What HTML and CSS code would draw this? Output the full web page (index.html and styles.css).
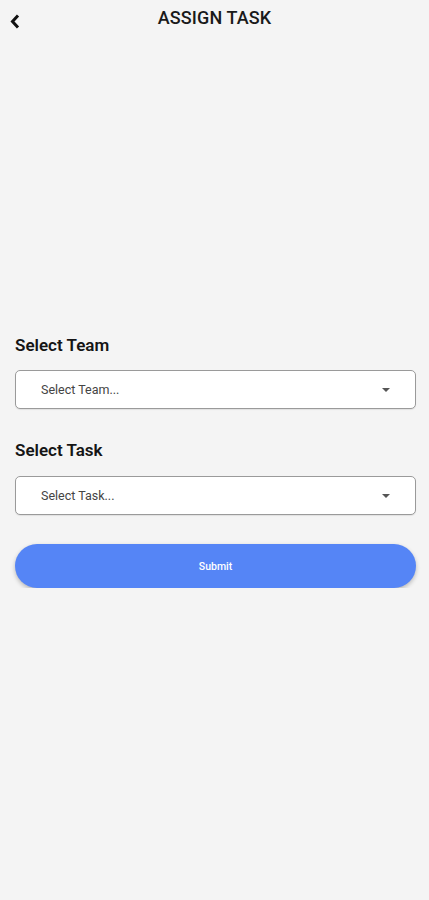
FILE: index.html
```html
<!DOCTYPE html>
<html lang="en">
<head>
<meta charset="utf-8">
<title>Assign Task</title>
<link rel="stylesheet" href="styles.css">
</head>
<body>
<header class="topbar">
  <button class="back" aria-label="Back">
    <svg width="10" height="15" viewBox="0 0 10 15"><polyline points="8,1.5 2.5,7.5 8,13.5" fill="none" stroke="#111" stroke-width="3" stroke-linejoin="miter"/></svg>
  </button>
  <h1 class="title">ASSIGN TASK</h1>
  <span></span>
</header>
<main class="form">
  <label class="label">Select Team</label>
  <div class="select">
    <span class="placeholder">Select Team...</span>
    <span class="caret"></span>
  </div>
  <label class="label label-second">Select Task</label>
  <div class="select">
    <span class="placeholder">Select Task...</span>
    <span class="caret"></span>
  </div>
  <button class="submit">Submit</button>
</main>
</body>
</html>
```
FILE: styles.css
```css
html, body {
  margin: 0;
  padding: 0;
  background: #f4f4f4;
  font-family: Roboto, "Liberation Sans", sans-serif;
  color: #111;
}
.topbar {
  display: grid;
  grid-template-columns: 1fr auto 1fr;
  align-items: start;
  padding-top: 7px;
  height: 33px;
}
.back {
  border: 0;
  background: none;
  padding: 0;
  margin: 7px 0 0 10px;
  width: 10px;
  height: 15px;
  display: block;
  justify-self: start;
}
.back svg { display: block; }
.title {
  margin: 0;
  font-size: 18px;
  line-height: 21px;
  font-weight: 500;
  color: #1a1a1a;
  letter-spacing: 0.1px;
}
.form {
  display: flex;
  flex-direction: column;
  padding: 295px 13px 0 15px;
}
.label {
  font-size: 17px;
  line-height: 20px;
  font-weight: 600;
  color: #151515;
  margin-bottom: 15px;
}
.label-second {
  margin-top: 31px;
  margin-bottom: 16px;
}
.select {
  height: 37px;
  border: 1px solid #9a9a9a;
  border-radius: 5px;
  background: #fff;
  display: flex;
  align-items: center;
  justify-content: space-between;
  padding: 0 25px 0 25px;
  box-shadow: 0 1px 1px rgba(0,0,0,0.08);
}
.placeholder {
  font-size: 12.5px;
  color: #444;
}
.caret {
  width: 0;
  height: 0;
  border-left: 4px solid transparent;
  border-right: 4px solid transparent;
  border-top: 4px solid #555;
}
.submit {
  margin-top: 29px;
  height: 44px;
  border: 0;
  border-radius: 22px;
  background: #5585f6;
  color: #fff;
  font-family: Roboto, "Liberation Sans", sans-serif;
  font-size: 10.5px;
  font-weight: 500;
  box-shadow: 0 2px 4px rgba(0,0,0,0.25);
}
```
